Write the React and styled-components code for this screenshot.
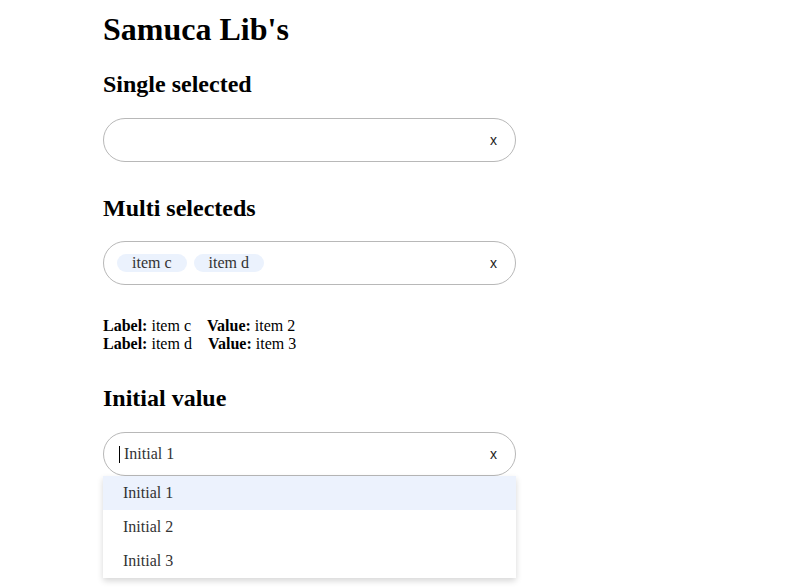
import React from "react";
import styled, { createGlobalStyle } from "styled-components";

const Global = createGlobalStyle`
  html, body { margin: 0; padding: 0; background: #fff; }
  body {
    min-height: 100vh;
    font-family: "Liberation Serif", "Times New Roman", serif;
    color: #000;
  }
`;

const Page = styled.div`
  padding: 11px 0 0 103px;
  width: 413px;
`;

const Title = styled.h1`
  font-size: 32px;
  font-weight: bold;
  margin: 0 0 23px;
`;

const Heading = styled.h2`
  font-size: 24px;
  font-weight: bold;
  margin: 0 0 ${(p) => p.$gap || 20}px;
`;

const Section = styled.section`
  margin-bottom: ${(p) => p.$gap || 33}px;
`;

const Field = styled.div`
  position: relative;
`;

const Control = styled.div`
  box-sizing: border-box;
  height: 44px;
  border: 1px solid #b8b8b8;
  border-radius: 22px;
  display: flex;
  align-items: center;
  padding: 0 15px 0 ${(p) => (p.$tags ? 13 : 15)}px;
  background: #fff;
`;

const Values = styled.div`
  flex: 1;
  display: flex;
  align-items: center;
  gap: ${(p) => (p.$tags ? 7 : 0)}px;
  font-size: 16px;
  color: #333;
`;

const Tag = styled.span`
  background: #ebf2fd;
  border-radius: 9px;
  padding: 0 15px;
  height: 18px;
  line-height: 18px;
  color: #333;
`;

const Caret = styled.span`
  display: inline-block;
  width: 1px;
  height: 17px;
  background: #000;
  margin-right: 4px;
`;

const Clear = styled.button`
  border: 0;
  background: none;
  padding: 0;
  margin-right: 3px;
  font-family: "Liberation Sans", Arial, sans-serif;
  font-size: 14px;
  color: #222;
  cursor: pointer;
`;

const Info = styled.div`
  font-size: 16px;
  line-height: 18px;
  margin-top: 32px;
`;

const InfoRow = styled.div`
  display: flex;
`;

const Pair = styled.span`
  margin-right: 16px;
`;

const Menu = styled.ul`
  position: absolute;
  left: 0;
  right: 0;
  top: 44px;
  margin: 0;
  padding: 0;
  list-style: none;
  background: #fff;
  box-shadow: 0 3px 6px rgba(0, 0, 0, 0.16);
  border-radius: 0 0 2px 2px;
  z-index: 2;
`;

const Option = styled.li`
  height: 34px;
  display: flex;
  align-items: center;
  padding-left: 20px;
  font-size: 16px;
  color: #333;
  background: ${(p) => (p.$active ? "#ecf2fd" : "#fff")};
`;

const selected = [
  { label: "item c", value: "item 2" },
  { label: "item d", value: "item 3" },
];

export default function App() {
  return (
    <>
      <Global />
      <Page>
        <Title>Samuca Lib's</Title>
        <Section>
          <Heading>Single selected</Heading>
          <Control>
            <Values />
            <Clear>x</Clear>
          </Control>
        </Section>
        <Section $gap={32}>
          <Heading $gap={19}>Multi selecteds</Heading>
          <Control $tags>
            <Values $tags>
              {selected.map((s) => (
                <Tag key={s.label}>{s.label}</Tag>
              ))}
            </Values>
            <Clear>x</Clear>
          </Control>
          <Info>
            {selected.map((s) => (
              <InfoRow key={s.label}>
                <Pair>
                  <b>Label:</b> {s.label}
                </Pair>
                <span>
                  <b>Value:</b> {s.value}
                </span>
              </InfoRow>
            ))}
          </Info>
        </Section>
        <Section $gap={0}>
          <Heading>Initial value</Heading>
          <Field>
            <Control>
              <Values>
                <Caret />
                <span>Initial 1</span>
              </Values>
              <Clear>x</Clear>
            </Control>
            <Menu>
              <Option $active>Initial 1</Option>
              <Option>Initial 2</Option>
              <Option>Initial 3</Option>
            </Menu>
          </Field>
        </Section>
      </Page>
    </>
  );
}
